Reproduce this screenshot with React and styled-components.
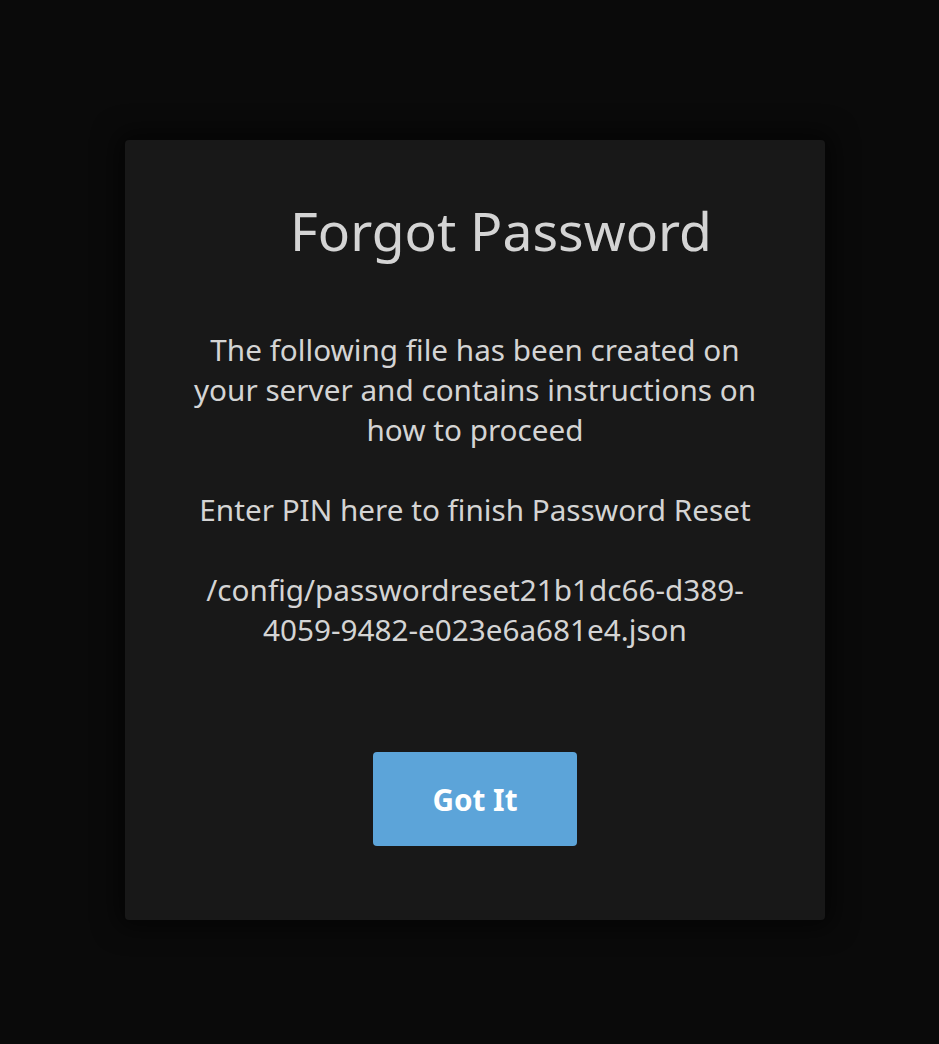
import React from 'react';
import styled, { createGlobalStyle } from 'styled-components';

const GlobalStyle = createGlobalStyle`
  html, body {
    margin: 0;
    padding: 0;
    background-color: #0a0a0a;
  }
  body {
    font-family: "Noto Sans", "Open Sans", sans-serif;
  }
`;

const Page = styled.div`
  min-height: 1044px;
  box-sizing: border-box;
  padding-top: 140px;
  padding-left: 125px;
`;

const Dialog = styled.div`
  width: 700px;
  height: 780px;
  box-sizing: border-box;
  background-color: #181818;
  border-radius: 4px;
  box-shadow: 0 0 24px 8px rgba(0, 0, 0, 0.55);
  display: flex;
  flex-direction: column;
  align-items: center;
  padding-top: 56px;
  font-size: 29.7px;
`;

const Title = styled.h1`
  margin: 0;
  padding-left: 52px;
  font-size: 1.8em;
  font-weight: 400;
  line-height: 70px;
  color: #d4d4d4;
`;

const Body = styled.div`
  margin-top: 64px;
  width: 585px;
  text-align: center;
  color: #d4d4d4;
  line-height: 40px;
`;

const Para = styled.p`
  margin: 0 0 ${p => (p.$last ? 0 : 40)}px;
`;

const Button = styled.button`
  margin-top: 102px;
  width: 204px;
  height: 94px;
  border: 0;
  border-radius: 4px;
  background-color: #5ca4d9;
  color: #ffffff;
  font-family: "Noto Sans", "Open Sans", sans-serif;
  font-size: 1em;
  font-weight: 700;
  cursor: pointer;
`;

export default function App() {
  return (
    <>
      <GlobalStyle />
      <Page>
        <Dialog>
          <Title>Forgot Password</Title>
          <Body>
            <Para>The following file has been created on your server and contains instructions on how to proceed</Para>
            <Para>Enter PIN here to finish Password Reset</Para>
            <Para $last>/config/passwordreset21b1dc66-d389-4059-9482-e023e6a681e4.json</Para>
          </Body>
          <Button>Got It</Button>
        </Dialog>
      </Page>
    </>
  );
}
